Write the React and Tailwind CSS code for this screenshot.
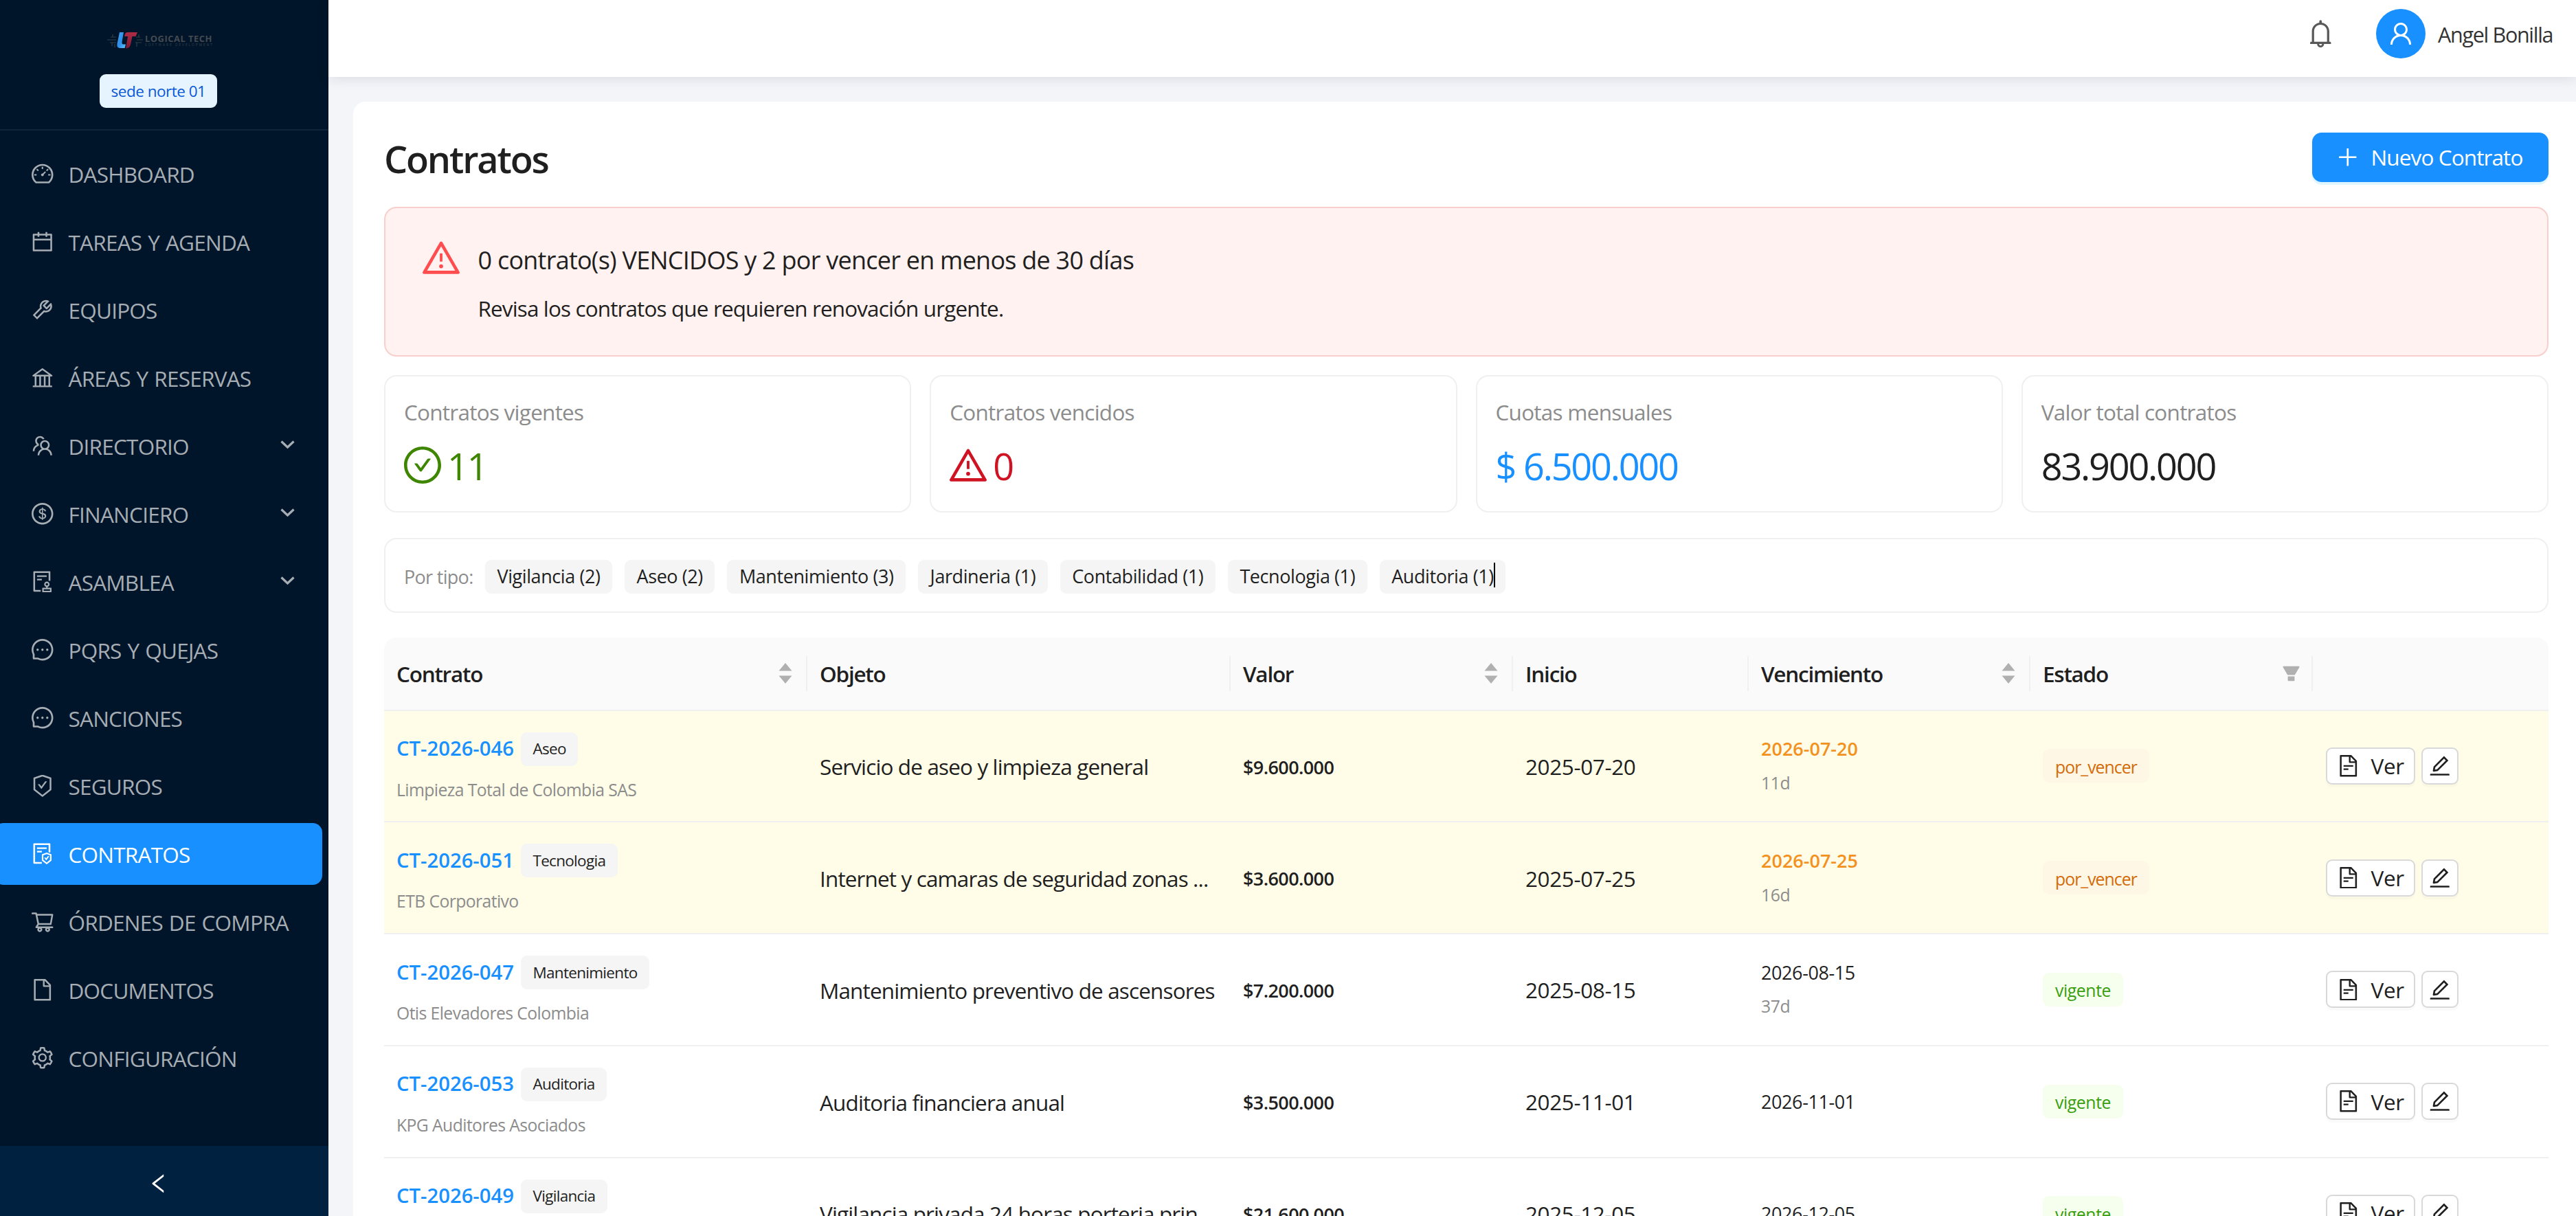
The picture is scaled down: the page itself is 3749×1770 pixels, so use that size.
import React from "react";
import {
  AiOutlineDashboard, AiOutlineCalendar, AiOutlineTool, AiOutlineBank, AiOutlineTeam, AiOutlineDollarCircle,
  AiOutlineAudit, AiOutlineMessage, AiOutlineSafetyCertificate, AiOutlineFileProtect, AiOutlineShoppingCart,
  AiOutlineFile, AiOutlineSetting, AiOutlineLeft, AiOutlineBell, AiOutlineUser, AiOutlinePlus, AiOutlineWarning,
  AiOutlineCheckCircle, AiOutlineFileText, AiOutlineEdit, AiFillFilter,
} from "react-icons/ai";

const VB = "64 64 896 896";

const menu = [
  ["DASHBOARD", AiOutlineDashboard],
  ["TAREAS Y AGENDA", AiOutlineCalendar],
  ["EQUIPOS", AiOutlineTool],
  ["ÁREAS Y RESERVAS", AiOutlineBank],
  ["DIRECTORIO", AiOutlineTeam, true],
  ["FINANCIERO", AiOutlineDollarCircle, true],
  ["ASAMBLEA", AiOutlineAudit, true],
  ["PQRS Y QUEJAS", AiOutlineMessage],
  ["SANCIONES", AiOutlineMessage],
  ["SEGUROS", AiOutlineSafetyCertificate],
  ["CONTRATOS", AiOutlineFileProtect],
  ["ÓRDENES DE COMPRA", AiOutlineShoppingCart],
  ["DOCUMENTOS", AiOutlineFile],
  ["CONFIGURACIÓN", AiOutlineSetting],
];

function Logo() {
  return (
    <svg className="h-[28px] w-[158px]" viewBox="0 0 158 28">
      <defs>
        <linearGradient id="blue" x1="0" y1="0" x2="1" y2="1">
          <stop offset="0" stopColor="#3fa9f5" />
          <stop offset="0.5" stopColor="#2f8de8" />
          <stop offset="1" stopColor="#5cc4ff" />
        </linearGradient>
        <linearGradient id="red" x1="0" y1="0" x2="0" y2="1">
          <stop offset="0" stopColor="#b02c48" />
          <stop offset="1" stopColor="#7c1a33" />
        </linearGradient>
      </defs>
      <g stroke="#323e49" strokeWidth="1.200" fill="none">
        <path d="M4 13h13M9 9h8M8 17h9M12 5v4M11 17v5M15 19v5M47 13h9M46 9h6M45 17h9M50 5v4M47 17v6" />
      </g>
      <path d="M22 2h6l-2.500 14q-.5 3.500 2 3.500h3.500l-1.500 5.500h-6q-6 0-5-6z" fill="url(#blue)" />
      <path d="M33 2h15l-2.500 6h-5l-2.500 12q-1 5-7 5.500l3-17.500h-5q1-6 4-6z" fill="url(#red)" />
      <text x="59" y="16" textLength="98" lengthAdjust="spacingAndGlyphs" fill="#454a51" className="text-[12px] font-bold tracking-[0.5px]" fontFamily="Open Sans, sans-serif">LOGICAL TECH</text>
      <text x="59" y="21.500" textLength="98" fill="#38434d" className="text-[4.800px] tracking-normal" fontFamily="Open Sans, sans-serif">SOFTWARE DEVELOPMENT</text>
    </svg>
  );
}

function Sidebar() {
  return (
    <aside className="flex h-full w-[478px] shrink-0 flex-col bg-[#001529]">
      <div className="flex h-[190px] shrink-0 flex-col items-center border-b-2 border-[#10243a] pr-[17px] pt-[45px]">
        <Logo />
        <span className="mt-[35px] flex h-[49px] w-[171px] items-center justify-center rounded-[9px] bg-[#e6f4ff] text-[22.500px] tracking-[-0.5px] text-[#0958d9]">sede norte 01</span>
      </div>
      <nav className="flex flex-1 flex-col gap-[9px] pt-[18px]">
        {menu.map(([label, Icon, sub]) => {
          const on = label === "CONTRATOS";
          return (
            <div key={label} className={`-ml-[9px] mr-[9px] flex h-[90px] shrink-0 items-center rounded-[14px] pl-[55px] pr-[40px] text-[31.500px] tracking-[-0.77px] [word-spacing:1.500px] ${on ? "bg-[#1890ff] text-white" : "text-[#a6adb4]"}`}>
              <Icon viewBox={VB} className="size-[31.500px] shrink-0" />
              <span className="ml-[22px] flex-1 whitespace-nowrap pt-[2px]">{label}</span>
              {sub && (
                <svg className="-mt-[3px] h-[13px] w-[21px]" viewBox="0 0 21 13" fill="none" stroke="currentColor" strokeWidth="3.200">
                  <path d="M1.500 1.500 10.500 10l9-8.500" />
                </svg>
              )}
            </div>
          );
        })}
      </nav>
      <div className="flex h-[102px] shrink-0 items-center justify-center bg-[#002140] pr-[17px] pt-[7px] text-white">
        <AiOutlineLeft viewBox={VB} className="size-[31.500px]" />
      </div>
    </aside>
  );
}

function Tag({ children, className = "text-[22.500px] tracking-[-0.7px]" }) {
  return <span className={`inline-flex h-[49px] items-center whitespace-nowrap rounded-[9px] bg-[#f5f5f5] px-[17.500px] text-[#1f1f1f] ${className}`}>{children}</span>;
}

function Stat({ title, color, icon: Icon, children }) {
  return (
    <div className="h-[200px] flex-1 rounded-[18px] border-2 border-[#f0f0f0] px-[27px] pt-[27px]">
      <div className="h-[50px] text-[31.500px] leading-[50px] tracking-[-0.75px] text-[#8c8c8c]">{title}</div>
      <div className={`mt-[12px] flex h-[84px] items-center text-[54px] ${color}`}>
        {Icon && <Icon viewBox={VB} className="mr-[9px] -mt-[4px] size-[54px]" />}
        <span className="-mt-[2px] tracking-[-2.200px]">{children}</span>
      </div>
    </div>
  );
}

const types = ["Vigilancia (2)", "Aseo (2)", "Mantenimiento (3)", "Jardineria (1)", "Contabilidad (1)", "Tecnologia (1)", "Auditoria (1)"];

const GRID = "grid grid-cols-[616px_616px_411px_343px_410px_411px_1fr]";

const heads = [["Contrato", "sort"], ["Objeto"], ["Valor", "sort"], ["Inicio"], ["Vencimiento", "sort"], ["Estado", "filter"], [""]];

const rows = [
  { id: "CT-2026-046", tag: "Aseo", who: "Limpieza Total de Colombia SAS", obj: "Servicio de aseo y limpieza general", val: "$9.600.000", ini: "2025-07-20", ven: "2026-07-20", d: "11d", soon: true },
  { id: "CT-2026-051", tag: "Tecnologia", who: "ETB Corporativo", obj: "Internet y camaras de seguridad zonas ...", val: "$3.600.000", ini: "2025-07-25", ven: "2026-07-25", d: "16d", soon: true },
  { id: "CT-2026-047", tag: "Mantenimiento", who: "Otis Elevadores Colombia", obj: "Mantenimiento preventivo de ascensores", val: "$7.200.000", ini: "2025-08-15", ven: "2026-08-15", d: "37d" },
  { id: "CT-2026-053", tag: "Auditoria", who: "KPG Auditores Asociados", obj: "Auditoria financiera anual", val: "$3.500.000", ini: "2025-11-01", ven: "2026-11-01" },
  { id: "CT-2026-049", tag: "Vigilancia", obj: "Vigilancia privada 24 horas porteria prin...", val: "$21.600.000", ini: "2025-12-05", ven: "2026-12-05" },
];

function Row({ r }) {
  return (
    <div className={`${GRID} h-[162.750px] shrink-0 border-b-2 border-[#f0f0f0] ${r.soon ? "bg-[#fffde7]" : "bg-white"}`}>
      <div className="px-[18px] pt-[31px]">
        <div className="flex h-[49px] items-center gap-[10px]">
          <span className="text-[29.250px] font-semibold tracking-normal text-[#1890ff]">{r.id}</span>
          <Tag>{r.tag}</Tag>
        </div>
        {r.who && <div className="mt-[10px] text-[24.750px] leading-[50px] tracking-[-0.6px] text-[#8c8c8c]">{r.who}</div>}
      </div>
      <div className="flex items-center whitespace-nowrap px-[18px] pt-[2px] text-[31.500px] tracking-[-0.87px]">{r.obj}</div>
      <div className="flex items-center px-[18px] pt-[4px] text-[27px] font-semibold tracking-[-0.6px]">{r.val}</div>
      <div className="flex items-center px-[18px] pt-[1px] text-[31.500px]">{r.ini}</div>
      <div className="flex flex-col justify-center px-[18px] leading-[49.500px]">
        <div className={`text-[27px] ${r.soon ? "font-semibold tracking-normal text-[#f3911f]" : ""} ${r.d ? "" : "pt-[2px]"}`}>{r.ven}</div>
        {r.d && <div className="text-[24.750px] text-[#8c8c8c]">{r.d}</div>}
      </div>
      <div className="flex items-center px-[18px]">
        <span className={`flex h-[49px] items-center rounded-[9px] px-[18px] pt-[3px] text-[24.750px] ${r.soon ? "bg-[#fff7e6] tracking-[-0.95px] text-[#d46b08]" : "bg-[#f6ffed] text-[#389e0d]"}`}>{r.soon ? "por_vencer" : "vigente"}</span>
      </div>
      <div className="flex items-center gap-[9px] pl-[19px] text-[#1f1f1f]">
        <span className="flex h-[54px] w-[130px] items-center rounded-[9px] border-2 border-[#d9d9d9] bg-white pl-[15px] text-[31.500px] shadow-[0_4px_0_rgba(0,0,0,0.02)]">
          <AiOutlineFileText viewBox={VB} className="size-[31.500px]" />
          <span className="ml-[17px]">Ver</span>
        </span>
        <span className="flex size-[54px] items-center justify-center rounded-[9px] border-2 border-[#d9d9d9] bg-white shadow-[0_4px_0_rgba(0,0,0,0.02)]">
          <AiOutlineEdit viewBox={VB} className="size-[31.500px]" />
        </span>
      </div>
    </div>
  );
}

export default function App() {
  return (
    <div className="flex h-[1770px] w-[3749px] overflow-hidden bg-[#f4f5f9] font-['Open_Sans','Noto_Sans',sans-serif] tracking-[-0.4px] text-[#1f1f1f]">
      <Sidebar />
      <div className="flex min-w-0 flex-1 flex-col">
        <header className="z-10 flex h-[112px] shrink-0 items-start justify-end bg-white pr-[32px] pt-[13px] shadow-[0_2px_18px_rgba(0,21,41,0.12)]">
          <div className="flex h-[72px] items-center">
            <AiOutlineBell viewBox={VB} className="mr-[61px] size-[40.500px] text-[#595959]" />
            <span className="mr-[18px] flex size-[72px] items-center justify-center rounded-full bg-[#1890ff] text-white">
              <AiOutlineUser viewBox={VB} className="size-[36px]" />
            </span>
            <span className="w-[169px] whitespace-nowrap pt-[3px] text-[30.500px] tracking-[-1.300px] text-[#333]">Angel Bonilla</span>
          </div>
        </header>
        <main className="ml-[36px] mt-[36px] flex flex-1 flex-col overflow-hidden rounded-tl-[18px] bg-white pl-[45px] pr-[40px] pt-[45px]">
          <div className="flex h-[72px] shrink-0 items-center justify-between">
            <h1 className="pt-[4px] text-[54px] font-semibold leading-[72px] tracking-[-0.040em]">Contratos</h1>
            <button className="flex h-[72px] w-[344px] items-center rounded-[14px] bg-[#1890ff] pl-[36px] text-[31.500px] tracking-[-0.89px] text-white shadow-[0_4px_0_#dff6ff]">
              <AiOutlinePlus viewBox={VB} className="size-[31.500px]" />
              <span className="ml-[18px]">Nuevo Contrato</span>
            </button>
          </div>
          <section className="mt-[36px] flex h-[218px] shrink-0 rounded-[18px] border-2 border-[#f8cfcd] bg-[#fff2f0] pl-[53.500px] pt-[45px]">
            <AiOutlineWarning viewBox={VB} className="size-[54px] text-[#ff4d4f]" />
            <div className="ml-[27px]">
              <div className="mt-[3px] text-[36px] leading-[56px] tracking-[-0.76px]">0 contrato(s) VENCIDOS y 2 por vencer en menos de 30 días</div>
              <div className="mt-[17px] text-[31.500px] leading-[50px] tracking-[-0.88px]">Revisa los contratos que requieren renovación urgente.</div>
            </div>
          </section>
          <section className="mt-[27px] flex shrink-0 gap-[27px]">
            <Stat title="Contratos vigentes" icon={AiOutlineCheckCircle} color="text-[#3f8600]">11</Stat>
            <Stat title="Contratos vencidos" icon={AiOutlineWarning} color="text-[#cf1322]">0</Stat>
            <Stat title="Cuotas mensuales" color="text-[#1890ff]">$ 6.500.000</Stat>
            <Stat title="Valor total contratos" color="">83.900.000</Stat>
          </section>
          <section className="mt-[37px] flex h-[109px] shrink-0 items-center gap-[18px] rounded-[18px] border-2 border-[#f0f0f0] pl-[27px] pt-[3px]">
            <span className="w-[100px] whitespace-nowrap pt-[3px] text-[27px] tracking-[-0.7px] text-[#8c8c8c]">Por tipo:</span>
            {types.map((t) => (
              <span key={t} className="relative flex">
                <Tag className="text-[27px] tracking-[-0.42px]">{t}</Tag>
                {t === "Auditoria (1)" && <span className="absolute right-[15px] top-[4px] h-[36px] w-[2px] bg-black" />}
              </span>
            ))}
          </section>
          <section className="mt-[36px] flex flex-col">
            <div className={`${GRID} h-[106.500px] shrink-0 rounded-t-[18px] border-b-2 border-[#f0f0f0] bg-[#fafafa]`}>
              {heads.map(([h, kind], i) => (
                <div key={i} className="flex items-center">
                  <span className="flex-1 pl-[18px] text-[31.500px] font-semibold tracking-[-0.04em]">{h}</span>
                  {kind === "sort" && (
                    <svg className="mr-[20px] h-[32px] w-[20px]" viewBox="0 0 20 32" fill="#b0b0b0">
                      <path d="M10 1 19.500 12.500H.500zM10 31 .500 19.500h19z" />
                    </svg>
                  )}
                  {kind === "filter" && <AiFillFilter viewBox={VB} className="mr-[16px] size-[27px] text-[#b0b0b0]" />}
                  {i < 6 && <span className="h-[51px] w-[2px] bg-[#f0f0f0]" />}
                </div>
              ))}
            </div>
            {rows.map((r) => <Row key={r.id} r={r} />)}
          </section>
        </main>
      </div>
    </div>
  );
}
